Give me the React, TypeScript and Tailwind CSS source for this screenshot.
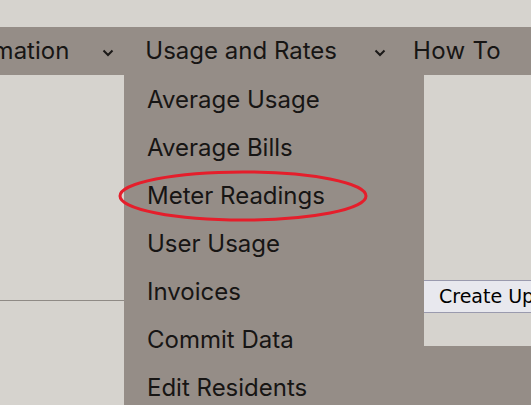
import React from "react";

const Chevron = () => (
  <svg width="12" height="8" viewBox="0 0 12 8" className="shrink-0 block mt-[3px]">
    <polyline points="1.5,1.5 6,6 10.5,1.5" fill="none" stroke="#1b1918" strokeWidth="2" />
  </svg>
);

const items = [
  "Average Usage",
  "Average Bills",
  "Meter Readings",
  "User Usage",
  "Invoices",
  "Commit Data",
  "Edit Residents",
];

export default function App() {
  return (
    <div
      className="w-[531px] h-[405px] overflow-hidden bg-[#d6d3ce] text-[#171514]"
      style={{ fontFamily: "Inter, 'Noto Sans', sans-serif" }}
    >
      <div className="h-[27px]" />
      <nav className="h-[48px] bg-[#958d87] flex items-center whitespace-nowrap text-[24px]">
        <span className="ml-[-60px]">Information</span>
        <span className="ml-[33px]"><Chevron /></span>
        <span className="ml-[31px]">Usage and Rates</span>
        <span className="ml-[37px]"><Chevron /></span>
        <span className="ml-[27px] tracking-[0.3px]">How To</span>
      </nav>
      <div className="flex h-[330px]">
        <div className="w-[124px] shrink-0">
          <div className="h-[225px]" />
          <div className="h-px bg-[#8f8a85]" />
        </div>
        <div className="w-[300px] shrink-0 bg-[#958d87] relative">
          {items.map((t) => (
            <div key={t} className="h-[48px] flex items-center pl-[23px] text-[24px] pt-[1px]">
              {t}
            </div>
          ))}
          <svg
            className="absolute left-[-6px] top-[95px]"
            width="254"
            height="54"
            viewBox="0 0 254 54"
          >
            <ellipse cx="125" cy="26" rx="123" ry="24" fill="none" stroke="#e51e2b" strokeWidth="3" />
          </svg>
        </div>
        <div className="flex-1 flex flex-col">
          <div className="h-[271px] bg-[#d6d3ce]">
            <div className="h-[205px]" />
            <div
              className="h-[33px] bg-[#e8e8ee] border-y border-[#9a9aae] flex items-center pl-[15px] text-[19px] whitespace-nowrap text-black"
              style={{ fontFamily: "'DejaVu Sans', sans-serif" }}
            >
              Create Update
            </div>
          </div>
          <div className="flex-1 bg-[#958d87]" />
        </div>
      </div>
    </div>
  );
}
